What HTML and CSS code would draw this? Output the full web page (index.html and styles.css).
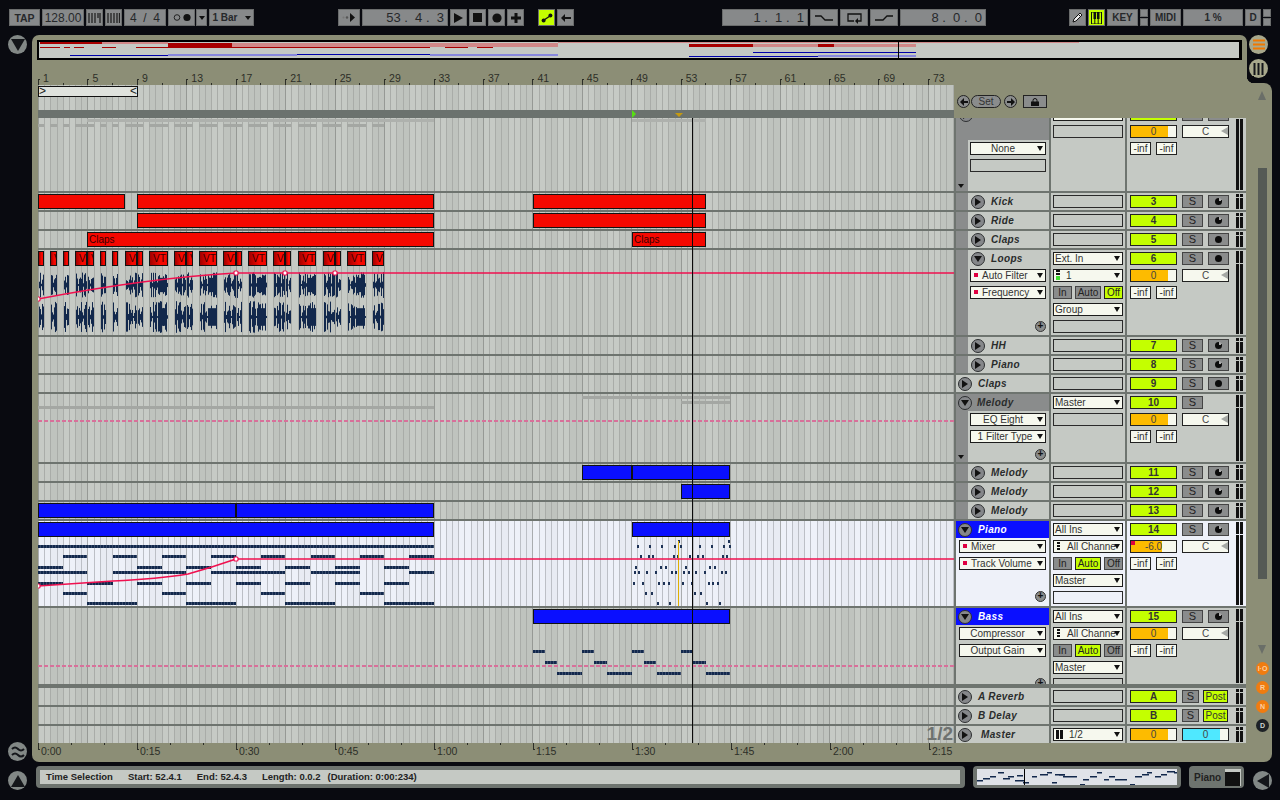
FILE: index.html
```html
<!DOCTYPE html>
<html lang="en">
<head>
  <meta charset="UTF-8">
  <title>Live</title>
  <link rel="stylesheet" href="styles.css">
</head>
<body>

  <div class="topbar">
    <div class="tgroup">
      <div class="btn b-tap"><b>TAP</b></div>
      <div class="btn b-num">128.00</div>
      <div class="btn b-sq"><svg width="13" height="10"><path d="M1 0v10M4 0v10M7 0v10M10 0v5M12 0v10" stroke="#222" stroke-width="1.3"/></svg></div>
      <div class="btn b-sq"><svg width="13" height="10"><path d="M1 0v10M4 0v10M7 0v10M10 0v10M12.5 0v10" stroke="#222" stroke-width="1.3"/></svg></div>
      <div class="btn b-num">4 &nbsp;/ &nbsp;4</div>
      <div class="btn b-mode"><svg width="20" height="9"><circle cx="5" cy="4.5" r="2.8" fill="none" stroke="#222"/><circle cx="15" cy="4.5" r="3.6" fill="#111"/></svg></div>
      <div class="btn b-drop"><span class="tri"></span></div>
      <div class="btn b-bar"><b class="semi">1 Bar</b><span class="tri"></span></div>
    </div>
    <div class="tgroup g-follow">
      <div class="btn b-follow"><svg width="14" height="9"><circle cx="1.5" cy="4.5" r="1" fill="#777"/><circle cx="5" cy="4.5" r="1.2" fill="#555"/><path d="M8 0l5 4.5-5 4.5z" fill="#111"/></svg></div>
      <div class="btn b-pos">53 .&nbsp; 4 .&nbsp; 3</div>
      <div class="btn b-sq"><svg width="11" height="12"><path d="M1 1l9 5-9 5z" fill="#111"/></svg></div>
      <div class="btn b-sq"><svg width="9" height="9"><rect width="9" height="9" fill="#111"/></svg></div>
      <div class="btn b-sq"><svg width="10" height="10"><circle cx="5" cy="5" r="4.6" fill="#111"/></svg></div>
      <div class="btn b-sq"><svg width="10" height="10"><path d="M5 0v10M0 5h10" stroke="#111" stroke-width="3"/></svg></div>
    </div>
    <div class="tgroup g-link">
      <div class="btn b-sq on"><svg width="12" height="10"><path d="M3 7l6-4" stroke="#111" stroke-width="1.4"/><circle cx="2.6" cy="7.4" r="2" fill="#111"/><circle cx="9.4" cy="2.6" r="2" fill="#111"/></svg></div>
      <div class="btn b-sq"><svg width="10" height="8"><path d="M4 0v8L0 4zM4 3h6v2H4z" fill="#111"/></svg></div>
    </div>
    <div class="tgroup g-loop">
      <div class="btn b-pos">1 .&nbsp; 1 .&nbsp; 1</div>
      <div class="btn b-wide"><svg width="18" height="8"><path d="M0 2h6l4 4h8" fill="none" stroke="#111" stroke-width="1.3"/></svg></div>
      <div class="btn b-wide"><svg width="17" height="12"><path d="M8 9H2V2h13v7h-3" fill="none" stroke="#111" stroke-width="1.3"/><path d="M12 6v6l-3-3z" fill="#111"/></svg></div>
      <div class="btn b-wide"><svg width="18" height="8"><path d="M0 6h8l4-4h6" fill="none" stroke="#111" stroke-width="1.3"/></svg></div>
      <div class="btn b-pos">8 .&nbsp; 0 .&nbsp; 0</div>
    </div>
    <div class="tgroup g-right">
      <div class="btn b-sq"><svg width="11" height="11"><path d="M1 10l1-3 6-6 2 2-6 6z" fill="#eee" stroke="#111"/><path d="M6.5 2.500l2 2" stroke="#111"/></svg></div>
      <div class="btn b-sq on"><svg width="11" height="12"><path d="M.5 0h10v12H.5zM3.800 0v12M7.200 0v12" fill="none" stroke="#111"/><path d="M2.500 0h2.600v7H2.500zM6 0h2.500v7H6z" fill="#111"/></svg></div>
      <div class="btn b-key"><b class="semi">KEY</b></div>
      <div class="pair"><span class="btn"></span><span class="btn"></span></div>
      <div class="btn b-key"><b class="semi">MIDI</b></div>
      <div class="btn b-cpu"><b class="semi">1 %</b></div>
      <div class="btn b-d"><b class="semi">D</b></div>
      <div class="pair"><span class="btn"></span><span class="btn"></span></div>
    </div>
  </div>

  <div class="middle">
    <div class="side-left">
      <div class="round"><svg width="14" height="12"><path d="M0 0h14L7 12z" fill="#14161a"/></svg></div>
      <div class="round"><svg width="14" height="12"><path d="M1 3q3-3 6 0t6 0M1 9q3-3 6 0t6 0" fill="none" stroke="#14161a" stroke-width="2"/></svg></div>
    </div>

    <div class="panel">
      <div class="overview">
        <svg id="overview" width="1205" height="20"></svg>
      </div>
      <div class="ruler" id="beat-ruler"></div>

      <div class="head-strip">
        <div class="locators grid-bg">
          <div class="loop-brace"><span>&gt;</span><span>&lt;</span></div>
          <div class="scrub">
            <span class="m-green"></span>
            <span class="m-yellow"></span>
          </div>
        </div>
        <div class="set-ctl">
          <span class="nav"><svg width="8" height="8"><path d="M0 4l4-4v3h4v2H4v3z" fill="#111"/></svg></span>
          <span class="set-btn">Set</span>
          <span class="nav"><svg width="8" height="8"><path d="M8 4L4 0v3H0v2h4v3z" fill="#111"/></svg></span>
          <span class="lock"><svg width="8" height="8"><path d="M2 4V2.500a2 2 0 0 1 4 0V4" fill="none" stroke="#111"/><rect y="3.500" width="8" height="4.500" fill="#111"/></svg></span>
        </div>
      </div>

      <div class="tracks">
        <div class="track t-first">
          <div class="lane grid-bg" id="drums"></div>
          <div class="name name-group">
            <div class="group-top"><span class="fold cut"></span></div>
            <div class="group-body">
              <span class="strip"><i class="down"></i></span>
              <div class="dev-list">
                <div class="dd center">None</div>
                <div class="box"></div>
              </div>
            </div>
          </div>
          <div class="col">
            <div class="dd"></div>
            <div class="box"></div>
          </div>
          <div class="mix">
            <div class="mix-main">
              <div class="row-w"><span class="act"></span><span class="sbtn"></span><span class="sbtn"></span></div>
              <div class="row-w"><span class="slider"><i></i><em>0</em></span><span class="pan">C</span></div>
              <div class="row-w"><span class="inf">-inf</span><span class="inf">-inf</span></div>
            </div>
            <div class="meter tall"><i></i><i></i></div>
          </div>
        </div>

        <div class="track">
          <div class="lane grid-bg" id="kick"></div>
          <div class="name child"><span class="fold"></span><span class="tname">Kick</span></div>
          <div class="col"><div class="box"></div></div>
          <div class="mix"><div class="mix-main"><div class="row-w"><span class="act">3</span><span class="sbtn">S</span><span class="sbtn arm midi"></span></div></div><div class="meter"><i></i><i></i></div></div>
        </div>
        <div class="track">
          <div class="lane grid-bg" id="ride"></div>
          <div class="name child"><span class="fold"></span><span class="tname">Ride</span></div>
          <div class="col"><div class="box"></div></div>
          <div class="mix"><div class="mix-main"><div class="row-w"><span class="act">4</span><span class="sbtn">S</span><span class="sbtn arm midi"></span></div></div><div class="meter"><i></i><i></i></div></div>
        </div>
        <div class="track">
          <div class="lane grid-bg" id="claps"></div>
          <div class="name child"><span class="fold"></span><span class="tname">Claps</span></div>
          <div class="col"><div class="box"></div></div>
          <div class="mix"><div class="mix-main"><div class="row-w"><span class="act">5</span><span class="sbtn">S</span><span class="sbtn arm"></span></div></div><div class="meter"><i></i><i></i></div></div>
        </div>

        <div class="track t-open">
          <div class="lane grid-bg" id="loops"></div>
          <div class="name child">
            <div class="opened">
              <div class="title"><span class="fold open"></span><span class="tname">Loops</span></div>
              <div class="dd"><i class="red"></i>Auto Filter</div>
              <div class="dd"><i class="red"></i>Frequency</div>
              <span class="plus">+</span>
            </div>
          </div>
          <div class="col">
            <div class="dd">Ext. In</div>
            <div class="dd"><i class="chan"></i>1</div>
            <div class="io"><span class="sbtn i">In</span><span class="sbtn a">Auto</span><span class="sbtn o yel">Off</span></div>
            <div class="dd">Group</div>
            <div class="box"></div>
          </div>
          <div class="mix">
            <div class="mix-main">
              <div class="row-w"><span class="act">6</span><span class="sbtn">S</span><span class="sbtn arm"></span></div>
              <div class="row-w"><span class="slider"><i></i><em>0</em></span><span class="pan">C</span></div>
              <div class="row-w"><span class="inf">-inf</span><span class="inf">-inf</span></div>
            </div>
            <div class="meter tall"><i></i><i></i></div>
          </div>
        </div>

        <div class="track">
          <div class="lane grid-bg" id="hh"></div>
          <div class="name child"><span class="fold"></span><span class="tname">HH</span></div>
          <div class="col"><div class="box"></div></div>
          <div class="mix"><div class="mix-main"><div class="row-w"><span class="act">7</span><span class="sbtn">S</span><span class="sbtn arm midi"></span></div></div><div class="meter"><i></i><i></i></div></div>
        </div>
        <div class="track">
          <div class="lane grid-bg" id="piano1"></div>
          <div class="name child"><span class="fold"></span><span class="tname">Piano</span></div>
          <div class="col"><div class="box"></div></div>
          <div class="mix"><div class="mix-main"><div class="row-w"><span class="act">8</span><span class="sbtn">S</span><span class="sbtn arm midi"></span></div></div><div class="meter"><i></i><i></i></div></div>
        </div>
        <div class="track">
          <div class="lane grid-bg" id="claps2"></div>
          <div class="name"><span class="fold top"></span><span class="tname">Claps</span></div>
          <div class="col"><div class="box"></div></div>
          <div class="mix"><div class="mix-main"><div class="row-w"><span class="act">9</span><span class="sbtn">S</span><span class="sbtn arm"></span></div></div><div class="meter"><i></i><i></i></div></div>
        </div>

        <div class="track t-melody">
          <div class="lane grid-bg" id="melody"></div>
          <div class="name name-group">
            <div class="group-top small"><span class="fold open top"></span><span class="tname t-top">Melody</span></div>
            <div class="group-body">
              <span class="strip"><i class="down"></i></span>
              <div class="dev-list">
                <div class="dd center">EQ Eight</div>
                <div class="dd center tight">1 Filter Type</div>
                <span class="plus">+</span>
              </div>
            </div>
          </div>
          <div class="col">
            <div class="dd">Master</div>
            <div class="box"></div>
          </div>
          <div class="mix">
            <div class="mix-main">
              <div class="row-w"><span class="act">10</span><span class="sbtn">S</span></div>
              <div class="row-w"><span class="slider"><i></i><em>0</em></span><span class="pan">C</span></div>
              <div class="row-w"><span class="inf">-inf</span><span class="inf">-inf</span></div>
            </div>
            <div class="meter tall"><i></i><i></i></div>
          </div>
        </div>

        <div class="track">
          <div class="lane grid-bg" id="mel1"></div>
          <div class="name child"><span class="fold"></span><span class="tname">Melody</span></div>
          <div class="col"><div class="box"></div></div>
          <div class="mix"><div class="mix-main"><div class="row-w"><span class="act">11</span><span class="sbtn">S</span><span class="sbtn arm midi"></span></div></div><div class="meter"><i></i><i></i></div></div>
        </div>
        <div class="track">
          <div class="lane grid-bg" id="mel2"></div>
          <div class="name child"><span class="fold"></span><span class="tname">Melody</span></div>
          <div class="col"><div class="box"></div></div>
          <div class="mix"><div class="mix-main"><div class="row-w"><span class="act">12</span><span class="sbtn">S</span><span class="sbtn arm midi"></span></div></div><div class="meter"><i></i><i></i></div></div>
        </div>
        <div class="track">
          <div class="lane grid-bg" id="mel3"></div>
          <div class="name child"><span class="fold"></span><span class="tname">Melody</span></div>
          <div class="col"><div class="box"></div></div>
          <div class="mix"><div class="mix-main"><div class="row-w"><span class="act">13</span><span class="sbtn">S</span><span class="sbtn arm midi"></span></div></div><div class="meter"><i></i><i></i></div></div>
        </div>

        <div class="track t-open selected">
          <div class="lane grid-bg" id="piano"></div>
          <div class="name">
            <div class="blue-title"><span class="fold open top"></span><span class="tname">Piano</span></div>
            <div class="dev-wide">
              <div class="dd"><i class="red"></i>Mixer</div>
              <div class="dd"><i class="red"></i>Track Volume</div>
              <span class="plus">+</span>
            </div>
          </div>
          <div class="col">
            <div class="dd">All Ins</div>
            <div class="dd tight"><i class="dots"></i>All Channe</div>
            <div class="io"><span class="sbtn i">In</span><span class="sbtn a yel">Auto</span><span class="sbtn o">Off</span></div>
            <div class="dd">Master</div>
            <div class="box"></div>
          </div>
          <div class="mix">
            <div class="mix-main">
              <div class="row-w"><span class="act">14</span><span class="sbtn">S</span><span class="sbtn arm midi"></span></div>
              <div class="row-w"><span class="slider low"><i></i><em>-6.0</em><u></u></span><span class="pan">C</span></div>
              <div class="row-w"><span class="inf">-inf</span><span class="inf">-inf</span></div>
            </div>
            <div class="meter tall"><i></i><i></i></div>
          </div>
        </div>

        <div class="track t-bass">
          <div class="lane grid-bg" id="bass"></div>
          <div class="name">
            <div class="blue-title"><span class="fold open top"></span><span class="tname">Bass</span></div>
            <div class="dev-wide">
              <div class="dd center">Compressor</div>
              <div class="dd center">Output Gain</div>
              <span class="plus">+</span>
            </div>
          </div>
          <div class="col">
            <div class="dd">All Ins</div>
            <div class="dd tight"><i class="dots"></i>All Channe</div>
            <div class="io"><span class="sbtn i">In</span><span class="sbtn a yel">Auto</span><span class="sbtn o">Off</span></div>
            <div class="dd">Master</div>
            <div class="box"></div>
          </div>
          <div class="mix">
            <div class="mix-main">
              <div class="row-w"><span class="act">15</span><span class="sbtn">S</span><span class="sbtn arm midi"></span></div>
              <div class="row-w"><span class="slider"><i></i><em>0</em></span><span class="pan">C</span></div>
              <div class="row-w"><span class="inf">-inf</span><span class="inf">-inf</span></div>
            </div>
            <div class="meter tall"><i></i><i></i></div>
          </div>
        </div>

        <div class="track">
          <div class="lane grid-bg"></div>
          <div class="name"><span class="fold top"></span><span class="tname">A Reverb</span></div>
          <div class="col"><div class="box"></div></div>
          <div class="mix"><div class="mix-main"><div class="row-w"><span class="act">A</span><span class="sbtn ret">S</span><span class="post">Post</span></div></div><div class="meter"><i></i><i></i></div></div>
        </div>
        <div class="track">
          <div class="lane grid-bg"></div>
          <div class="name"><span class="fold top"></span><span class="tname">B Delay</span></div>
          <div class="col"><div class="box"></div></div>
          <div class="mix"><div class="mix-main"><div class="row-w"><span class="act">B</span><span class="sbtn ret">S</span><span class="post">Post</span></div></div><div class="meter"><i></i><i></i></div></div>
        </div>
        <div class="track">
          <div class="lane grid-bg"><span class="zoom-tag">1/2</span></div>
          <div class="name"><span class="fold top"></span><span class="tname t-master">Master</span></div>
          <div class="col"><div class="dd"><i class="ii"></i>1/2</div></div>
          <div class="mix"><div class="mix-main"><div class="row-w"><span class="slider"><i></i><em>0</em></span><span class="slider cyan"><i></i><em>0</em></span></div></div><div class="meter"><i></i><i></i></div></div>
        </div>

        <div class="playhead"></div>
      </div>

      <div class="ruler time" id="time-ruler"></div>
    </div>

    <div class="rail">
      <div class="tabs">
        <div class="round"><svg width="12" height="11"><path d="M0 1.500h12M0 5.500h12M0 9.500h12" stroke="#f07800" stroke-width="2"/></svg></div>
        <div class="round"><svg width="11" height="12"><path d="M1.500 0v12M5.500 0v12M9.500 0v12" stroke="#14161a" stroke-width="2"/></svg></div>
      </div>
      <div class="rail-body">
        <span class="arrow up"></span>
        <div class="scroll"></div>
        <span class="arrow dn"></span>
        <span class="mini m1">I·O</span>
        <span class="mini m2">R</span>
        <span class="mini m3">N</span>
        <span class="mini m4">D</span>
      </div>
    </div>
  </div>

  <div class="statusbar">
    <div class="round"><svg width="14" height="12"><path d="M7 0l7 12H0z" fill="#14161a"/></svg></div>
    <div class="status">
      <span>Time Selection</span><span>Start: 52.4.1</span><span>End: 52.4.3</span><span>Length: 0.0.2</span><span class="dur">(Duration: 0:00:234)</span>
    </div>
    <div class="thumb"><svg id="thumb" width="200" height="16"></svg></div>
    <div class="instr"><b>Piano</b><span class="amp"></span></div>
    <div class="round last"><svg width="12" height="14"><path d="M0 7l12-7v14z" fill="#14161a"/></svg></div>
  </div>

  <script src="script.js"></script>
</body>
</html>
```

FILE: styles.css
```css
* {
  box-sizing: border-box;
}

body {
  margin: 0;
  width: 1280px;
  height: 800px;
  overflow: hidden;
  background-color: #090a10;
  font-family: "Liberation Sans", Arial, sans-serif;
  font-size: 10px;
  color: #222;
  display: flex;
  flex-direction: column;
}

/* top transport bar */
.topbar {
  height: 35px;
  padding: 9px 0 0 9px;
  display: flex;
  align-items: flex-start;
}

.tgroup {
  display: flex;
  gap: 2px;
}

.g-follow { margin-left: 84px; }
.g-link { margin-left: 14px; }
.g-loop { margin-left: 148px; }
.g-right { margin-left: 83px; }

.btn {
  height: 17px;
  background-color: #87898a;
  border: 1px solid #6a6c6c;
  display: flex;
  align-items: center;
  justify-content: center;
  color: #26282a;
  font-size: 12px;
  white-space: pre;
}

.btn b {
  font-size: 10.5px;
}

.btn .semi {
  font-size: 10px;
}

.btn.on {
  background-color: #c4ff00;
}

.b-tap { width: 31px; }
.b-num { width: 42px; }
.b-sq { width: 17px; }
.b-mode { width: 27px; margin-right: -1px; }
.b-drop { width: 11px; }
.b-bar { width: 45px; gap: 7px; }
.b-follow { width: 22px; }
.b-pos { width: 86px; justify-content: flex-end; padding-right: 3px; font-size: 13px; }
.b-wide { width: 28px; }
.b-key { width: 31px; }
.b-cpu { width: 60px; }
.b-d { width: 16px; }

.pair {
  display: flex;
  flex-direction: column;
  gap: 1px;
  width: 8px;
}

.pair .btn {
  height: 8px;
}

.tri {
  width: 0;
  height: 0;
  border: 3px solid transparent;
  border-top: 4px solid #111;
  border-bottom: 0;
}

/* middle section */
.middle {
  height: 727px;
  display: flex;
}

.side-left {
  width: 32px;
  padding: 0 0 0 8px;
  display: flex;
  flex-direction: column;
  justify-content: space-between;
}

.round {
  width: 19px;
  height: 19px;
  border-radius: 50%;
  background-color: #828886;
  display: flex;
  align-items: center;
  justify-content: center;
}

.side-left .round:last-child {
  margin-bottom: 1px;
}

.panel {
  width: 1215px;
  padding: 5px 0 0 5px;
  background-color: #8c8e76;
  border-radius: 7px 7px 0 7px;
}

.overview {
  width: 1205px;
  height: 20px;
  background-color: #c5c9c4;
  border: solid #000;
  border-width: 2px 3px 2px 2px;
  overflow: hidden;
}

.overview svg {
  display: block;
  margin: -2px 0 0 -2px;
}

.ruler {
  position: relative;
  width: 916px;
  height: 25px;
  margin-left: 1px;
}

.ruler span {
  position: absolute;
  bottom: 1px;
  color: #2c2e28;
  font-size: 10.5px;
  line-height: 11px;
}

.ruler i {
  position: absolute;
  bottom: 0;
  width: 1px;
  height: 2px;
  background-color: #2c2e28;
}

.ruler i.big {
  height: 6px;
}

.ruler i.big::after {
  content: "";
  position: absolute;
  left: 0;
  top: 0;
  width: 2px;
  height: 1px;
  background-color: #2c2e28;
}

.ruler.time {
  height: 19px;
}

.ruler.time span {
  top: 3px;
  bottom: auto;
}

.ruler.time i {
  top: 0;
  bottom: auto;
}

.ruler.time i.big {
  height: 7px;
}

.ruler.time i.big::after {
  top: 6px;
}

.grid-bg {
  background-image:
    repeating-linear-gradient(90deg, #969995 0 1px, transparent 1px 49.44px),
    repeating-linear-gradient(90deg, #a9aca8 0 1px, transparent 1px 6.18px),
    repeating-linear-gradient(90deg, #c6cac5 0 12.36px, #bfc3be 12.36px 24.72px);
}

.head-strip {
  height: 33px;
  margin-left: 1px;
  display: flex;
}

.locators {
  position: relative;
  width: 916px;
}

.loop-brace {
  position: absolute;
  left: 0;
  top: 1px;
  width: 100px;
  height: 11px;
  background-color: #dfe2dd;
  border: 1px solid #111;
  display: flex;
  justify-content: space-between;
  font-size: 12px;
  line-height: 9px;
}

.scrub {
  position: absolute;
  left: 0;
  bottom: 0;
  width: 100%;
  height: 8px;
  background-color: #6b726e;
}

.m-green {
  position: absolute;
  left: 594px;
  top: 0;
  width: 0;
  height: 0;
  border: 4px solid transparent;
  border-left: 4px solid #55e010;
  border-right: 0;
}

.m-yellow {
  position: absolute;
  left: 637px;
  top: 3px;
  width: 0;
  height: 0;
  border: 4px solid transparent;
  border-top: 4px solid #c59a10;
  border-bottom: 0;
}

.set-ctl {
  margin-left: 3px;
  padding-top: 10px;
  display: flex;
  gap: 1px;
  align-items: flex-start;
}

.nav {
  width: 13px;
  height: 13px;
  border-radius: 50%;
  border: 1px solid #222;
  background-color: #8a8c8c;
  display: flex;
  align-items: center;
  justify-content: center;
}

.set-btn {
  width: 30px;
  height: 13px;
  border: 1px solid #222;
  border-radius: 7px;
  background-color: #8a8c8c;
  text-align: center;
  line-height: 11px;
  margin-right: 2px;
  color: #333;
}

.lock {
  width: 24px;
  height: 13px;
  margin-left: 5px;
  border: 1px solid #222;
  background-color: #8a8c8c;
  display: flex;
  align-items: center;
  justify-content: center;
}

/* tracks */
.tracks {
  position: relative;
  margin-left: 1px;
  width: 1208px;
  background-color: #6e746f;
  display: flex;
  flex-direction: column;
  gap: 2px;
}

.track {
  height: 17px;
  display: flex;
  gap: 2px;
  overflow: hidden;
}

.t-first { height: 73px; }
.t-open { height: 85px; }
.t-melody { height: 68px; }
.t-bass { height: 76px; margin-bottom: 2px; }

.lane {
  position: relative;
  width: 916px;
  overflow: hidden;
}

.selected .lane {
  background-image:
    repeating-linear-gradient(90deg, #a9acaf 0 1px, transparent 1px 49.44px),
    repeating-linear-gradient(90deg, #bcbfc6 0 1px, transparent 1px 6.18px),
    repeating-linear-gradient(90deg, #eef1f9 0 12.36px, #e8ebf3 12.36px 24.72px);
}

.name {
  width: 93px;
  background-color: #c5c9c4;
  display: flex;
  align-items: flex-start;
  align-content: flex-start;
  flex-wrap: wrap;
  position: relative;
}

.name.child {
  border-left: 12px solid #8a8c8c;
}

.selected .name,
.selected .col,
.selected .mix {
  background-color: #eef1f9;
}

.fold {
  width: 14px;
  height: 14px;
  margin: 2px 0 0 3px;
  border-radius: 50%;
  background-color: #85878a;
  border: 1.5px solid #2c2e30;
  position: relative;
  flex: none;
}

.fold::after {
  content: "";
  position: absolute;
  left: 3px;
  top: 1.5px;
  border: 4px solid transparent;
  border-left: 6px solid #111;
  border-right: 0;
}

.fold.open::after {
  left: 1.5px;
  top: 3px;
  border: 4px solid transparent;
  border-top: 6px solid #111;
  border-bottom: 0;
}

.fold.top {
  margin-left: 2px;
}

.fold.cut {
  margin: -10px 0 0 3px;
}

.tname {
  margin: 2px 0 0 6px;
  font-weight: bold;
  font-style: italic;
  letter-spacing: .35px;
  line-height: 13px;
  color: #2a2c2c;
}

.t-master {
  margin-left: 9px;
}

.t-top {
  margin-left: 5px;
}

.name-group {
  background-color: transparent;
  flex-direction: column;
  flex-wrap: nowrap;
}

.group-top {
  width: 93px;
  height: 22px;
  background-color: #8a8c8c;
  display: flex;
  overflow: hidden;
}

.group-top.small {
  height: 17px;
}

.group-body {
  flex: 1;
  width: 93px;
  display: flex;
}

.strip {
  width: 12px;
  background-color: #8a8c8c;
  position: relative;
}

.down {
  position: absolute;
  left: 2px;
  bottom: 3px;
  border: 3.5px solid transparent;
  border-top: 4px solid #111;
  border-bottom: 0;
}

.dev-list {
  flex: 1;
  background-color: #c5c9c4;
  padding: 2px 3px 0 2px;
  display: flex;
  flex-direction: column;
  gap: 4px;
  position: relative;
}

.opened {
  width: 81px;
  height: 85px;
  padding: 0 3px 0 2px;
  display: flex;
  flex-direction: column;
  gap: 4px;
  position: relative;
}

.title {
  display: flex;
  height: 15px;
}

.opened .fold {
  margin-left: 1px;
}

.blue-title {
  width: 93px;
  height: 17px;
  background-color: #0a0fff;
  display: flex;
  margin-bottom: 2px;
}

.blue-title .tname {
  color: #fff;
}

.dev-wide {
  width: 93px;
  padding: 0 3px;
  display: flex;
  flex-direction: column;
  gap: 4px;
}

.plus {
  position: absolute;
  right: 3px;
  bottom: 3px;
  width: 11px;
  height: 11px;
  border-radius: 50%;
  background-color: #8a8c8c;
  border: 1px solid #333;
  line-height: 8px;
  text-align: center;
  color: #111;
  font-weight: bold;
}

.dev-list .plus {
  bottom: 2px;
}

.selected .plus,
.t-bass .plus {
  top: 70px;
  bottom: auto;
}

.col {
  width: 74px;
  padding: 2px 0 0 2px;
  background-color: #c5c9c4;
  display: flex;
  flex-direction: column;
  gap: 4px;
}

.box {
  height: 13px;
  border: 1px solid #2a2a2a;
  flex: none;
  width: 100%;
}

.col .box,
.col .dd,
.col .io {
  width: 70px;
}

.dd {
  height: 13px;
  flex: none;
  background-color: #f6f8ee;
  border: 1px solid #1c1c1c;
  line-height: 11px;
  padding: 0 10px 0 1px;
  position: relative;
  white-space: nowrap;
  overflow: hidden;
  color: #333;
}

.dd::after {
  content: "";
  position: absolute;
  right: 2px;
  top: 3px;
  border: 3px solid transparent;
  border-top: 5px solid #111;
  border-bottom: 0;
}

.dd.center {
  text-align: center;
  padding: 0 10px 0 0;
}

.dd.tight {
  padding-right: 6px;
}

.dd i {
  display: inline-block;
  vertical-align: top;
}

.red {
  width: 4px;
  height: 4px;
  background-color: #e00040;
  margin: 3px 4px 0 2px;
}

.chan {
  width: 4px;
  height: 10px;
  margin: 0 6px 0 1px;
  background: linear-gradient(#111 0 2px, #f6f8ee 2px 3px, #111 3px 5px, #f6f8ee 5px 6px, #44dd33 6px);
}

.dots {
  width: 3px;
  height: 9px;
  margin: 1px 7px 0 2px;
  background: repeating-linear-gradient(#111 0 2px, #f6f8ee 2px 3px);
}

.ii {
  width: 7px;
  height: 9px;
  margin: 1px 6px 0 1px;
  background: linear-gradient(90deg, #111 0 3px, transparent 3px 4px, #111 4px);
}

.io {
  display: flex;
  gap: 3px;
  flex: none;
}

.sbtn {
  display: block;
  width: 21px;
  height: 13px;
  background-color: #8a8c8c;
  border: 1px solid #444;
  text-align: center;
  line-height: 11px;
  color: #222;
  flex: none;
  position: relative;
}

.row-w .sbtn {
  font-size: 11px;
}

.sbtn.i { width: 19px; }
.sbtn.a { width: 26px; }
.sbtn.o { width: 19px; }

.sbtn.yel {
  background-color: #c4ff00;
  border-color: #222;
}

.row-w .sbtn.ret {
  width: 17px;
  margin-right: -1px;
}

.arm::after {
  content: "";
  position: absolute;
  left: 6px;
  top: 2px;
  width: 7px;
  height: 7px;
  border-radius: 50%;
  background-color: #0c0c0c;
}

.midi::after {
  background: conic-gradient(#0c0c0c 0 4%, #aaa 4% 18%, #0c0c0c 18%);
}

.mix {
  width: 119px;
  padding: 2px 0 0 3px;
  background-color: #c5c9c4;
  display: flex;
  gap: 7px;
}

.mix-main {
  width: 99px;
  display: flex;
  flex-direction: column;
  gap: 4px;
}

.row-w {
  display: flex;
  gap: 5px;
  height: 13px;
}

.act {
  width: 47px;
  height: 13px;
  background-color: #c4ff00;
  border: 1px solid #222;
  text-align: center;
  font-weight: bold;
  line-height: 11px;
  color: #333;
}

.post {
  width: 25px;
  height: 13px;
  background-color: #c4ff00;
  border: 1px solid #222;
  text-align: center;
  line-height: 11px;
  color: #333;
}

.slider {
  position: relative;
  width: 47px;
  height: 13px;
  background-color: #f6f8ee;
  border: 1px solid #222;
  text-align: center;
  line-height: 11px;
  color: #444;
}

.slider i {
  position: absolute;
  left: 0;
  top: 0;
  bottom: 0;
  width: 83%;
  background-color: #fdbb00;
}

.slider em {
  position: relative;
  font-style: normal;
}

.slider.low i {
  width: 68%;
}

.slider u {
  position: absolute;
  left: 0;
  top: 0;
  width: 4px;
  height: 4px;
  background-color: #e00040;
}

.slider.cyan i {
  background-color: #4fe8ff;
}

.pan {
  position: relative;
  width: 47px;
  height: 13px;
  background-color: #f6f8ee;
  border: 1px solid #222;
  text-align: center;
  line-height: 11px;
  color: #444;
}

.pan::after {
  content: "";
  position: absolute;
  right: 0;
  top: 1px;
  border: 4.5px solid transparent;
  border-right: 7px solid #a5a8a4;
  border-left: 0;
}

.inf {
  width: 21px;
  height: 13px;
  background-color: #f6f8ee;
  border: 1px solid #222;
  text-align: center;
  line-height: 11px;
  color: #333;
}

.meter {
  width: 7px;
  height: 15px;
  margin-top: -1px;
  display: flex;
  gap: 1px;
}

.meter.tall {
  height: 100%;
}

.meter i {
  width: 3px;
  background: linear-gradient(#111 0 3px, transparent 3px 4px, #111 4px);
}

.meter.tall i {
  background: linear-gradient(#111 0 12px, transparent 12px 13px, #111 13px);
}

.t-first .mix-main,
.t-first .col {
  margin-top: -12px;
}

.t-first .col {
  padding-top: 0;
}

.t-first .col .dd {
  margin-top: 2px;
}

.t-first .meter.tall i {
  background: #111;
}

.playhead {
  position: absolute;
  left: 654px;
  top: 0;
  bottom: 0;
  width: 1px;
  background-color: #0a0a0a;
}

.zoom-tag {
  position: absolute;
  right: 1px;
  top: -2px;
  font-size: 19px;
  line-height: 20px;
  font-weight: bold;
  color: #6e7270;
}

/* arrangement items placed by script.js */
.clip {
  position: absolute;
  top: 1px;
  height: 15px;
  border: 1px solid #111;
  overflow: hidden;
  white-space: nowrap;
  line-height: 13px;
  padding-left: 1px;
  color: #3a0000;
}

.c-red {
  background-color: #f50800;
}

.c-blue {
  background-color: #0a0fff;
}

.clip.small {
  background-image: linear-gradient(90deg, #a00000, #f50800 60%);
  padding-left: 3px;
}

.note {
  position: absolute;
  height: 3px;
  background: repeating-linear-gradient(90deg, #12284c 0 2px, #3a4c6c 2px 3px);
}

.note.tick {
  background: #1d3256;
}

.band {
  position: absolute;
  height: 3px;
  background-color: #a4a7a3;
}

.band.pale {
  background-color: #aeb1ad;
}

.dash-line {
  position: absolute;
  left: 0;
  right: 0;
  height: 2px;
  background: repeating-linear-gradient(90deg, #d8709a 0 4px, transparent 4px 6px);
}

.lane svg {
  position: absolute;
  left: 0;
  top: 0;
}

.cursor {
  position: absolute;
  left: 640px;
  top: 20px;
  bottom: 0;
  width: 1px;
  background-color: #e0b000;
}

/* right rail */
.rail {
  width: 25px;
  display: flex;
  flex-direction: column;
}

.tabs {
  height: 48px;
  position: relative;
}

.tabs .round {
  position: absolute;
  left: 2px;
  top: 0;
  background-color: #a8a88c;
}

.tabs .round:last-child {
  top: 24px;
}

.rail-body {
  position: relative;
  flex: 1;
  background-color: #8c8e76;
  border-radius: 0 8px 8px 0;
}

.rail-body::before {
  content: "";
  position: absolute;
  left: 0;
  top: -7px;
  width: 7px;
  height: 7px;
  background: radial-gradient(circle at 100% 0, #090a10 7px, #8c8e76 7.5px);
}

.arrow {
  position: absolute;
  left: 11px;
  border: 4.5px solid transparent;
}

.arrow.up {
  top: 8px;
  border-bottom: 9px solid #6a6e68;
  border-top: 0;
}

.arrow.dn {
  top: 562px;
  border-top: 9px solid #6a6e68;
  border-bottom: 0;
}

.scroll {
  position: absolute;
  left: 11px;
  top: 85px;
  width: 9px;
  height: 411px;
  background-color: #555a55;
}

.mini {
  position: absolute;
  left: 9px;
  width: 13px;
  height: 13px;
  border-radius: 50%;
  background-color: #f07c10;
  color: #ffd0a0;
  font-size: 7px;
  font-weight: bold;
  line-height: 13px;
  text-align: center;
}

.m1 { top: 579px; }
.m2 { top: 598px; }
.m3 { top: 617px; }

.m4 {
  top: 636px;
  background-color: #1e2226;
  color: #cfd3d0;
}

/* bottom status bar */
.statusbar {
  height: 38px;
  padding: 4px 0 0 8px;
  display: flex;
  align-items: flex-start;
}

.statusbar .round {
  margin-top: 5px;
}

.status {
  width: 929px;
  height: 22px;
  margin-left: 9px;
  background-color: #c5c9c4;
  border: solid #6e746f;
  border-width: 4px 5px 4px 4px;
  border-radius: 4px;
  padding-left: 6px;
  display: flex;
  gap: 15px;
  font-weight: bold;
  font-size: 9.5px;
  line-height: 14px;
  color: #222;
  white-space: nowrap;
}

.status .dur {
  margin-left: -8px;
}

.thumb {
  width: 208px;
  height: 22px;
  margin-left: 8px;
  background-color: #dfe2e8;
  border: solid #6e746f;
  border-width: 3px 4px;
  border-radius: 4px;
}

.thumb svg {
  display: block;
}

.instr {
  width: 55px;
  height: 22px;
  margin-left: 8px;
  background-color: #6e746f;
  border-radius: 4px;
  padding-left: 5px;
  display: flex;
  align-items: center;
  gap: 4px;
}

.instr b {
  font-size: 10px;
  color: #222;
}

.amp {
  width: 15px;
  height: 17px;
  background-color: #111;
  border-top: 3px solid #c5c9c4;
  box-shadow: 1px 0 0 #c5c9c4;
}

.statusbar .round.last {
  margin-left: 9px;
}
```

FILE: script.js
```js
// x coordinates below are screen pixels, lanes start at 38
const laneLeft = 38;

const smallClips = [
  [38, 44, ''], [50, 57, 'V'], [63, 69, ''], [75, 87, 'VT'], [87, 94, 'V'],
  [100, 106, ''], [112, 118, ''], [125, 137, 'VT'], [137, 143, ''], [149, 168, 'VTD'],
  [174, 186, 'VT'], [186, 193, 'V'], [199, 217, 'VTD'], [223, 236, 'VT'], [236, 242, ''],
  [248, 267, 'VTD'], [273, 285, 'VT'], [285, 291, ''], [298, 316, 'VTD'], [323, 335, 'VT'],
  [335, 341, ''], [347, 366, 'VTD'], [372, 384, 'VT']
];

function add(laneId, className, x1, x2, top, text) {
  const el = document.createElement('div');
  el.className = className;
  el.style.left = (x1 - laneLeft) + 'px';
  el.style.width = (x2 - x1) + 'px';
  if (top !== null) el.style.top = top + 'px';
  if (text) el.textContent = text;
  document.getElementById(laneId).appendChild(el);
  return el;
}

function clips(laneId, color, list) {
  list.forEach(c => add(laneId, 'clip ' + color, c[0], c[1], null, c[2]));
}

clips('kick', 'c-red', [[38, 125], [137, 434], [533, 706]]);
clips('ride', 'c-red', [[137, 434], [533, 706]]);
clips('claps', 'c-red', [[87, 434, 'Claps'], [632, 706, 'Claps']]);
clips('mel1', 'c-blue', [[582, 632], [632, 730]]);
clips('mel2', 'c-blue', [[681, 730]]);
clips('mel3', 'c-blue', [[38, 236], [236, 434]]);
clips('piano', 'c-blue', [[38, 434], [632, 730]]);
clips('bass', 'c-blue', [[533, 730]]);

smallClips.forEach(c => {
  add('loops', 'clip c-red small', c[0], c[1], null, c[2]);
  add('drums', 'band', c[0], c[1], 6);
});
add('drums', 'band pale', 87, 434, 1);
add('drums', 'band pale', 632, 706, 1);

// group overview bands
add('melody', 'band', 38, 434, 12);
add('melody', 'band', 582, 730, 2);
add('melody', 'band', 681, 730, 7);
add('melody', 'dash-line', 38, 954, 26);
add('bass', 'dash-line', 38, 954, 57);

// piano notes, one array per key row (screen y, then x pairs)
const pianoRows = [
  [546, 38, 434],
  [556, 63, 87, 113, 137, 162, 186, 211, 236, 261, 285, 311, 335, 360, 384, 409, 434],
  [567, 38, 63, 137, 162, 186, 211, 236, 261, 285, 310, 335, 360, 384, 409],
  [572, 38, 87, 113, 186, 211, 285, 311, 360, 409, 434],
  [583, 38, 63, 87, 113, 137, 162, 186, 211, 236, 261, 285, 310, 335, 360, 384, 409],
  [593, 63, 87, 162, 186, 261, 285, 360, 384],
  [603, 87, 137, 186, 236, 285, 335, 384, 434]
];
pianoRows.forEach(r => {
  for (let i = 1; i < r.length; i += 2) add('piano', 'note', r[i], r[i + 1], r[0] - 521 - 1);
});

const pianoTicks = {
  541: [728, 678],
  546: [637, 649, 661, 674, 680, 699, 711, 723, 729],
  556: [640, 648, 652, 673, 677, 689, 697, 702, 722, 726],
  567: [635, 660, 665, 685, 709, 714],
  572: [634, 638, 646, 655, 671, 675, 683, 688, 695, 704, 721, 725],
  583: [633, 642, 658, 663, 668, 682, 691, 708, 712, 717],
  593: [645, 651, 694, 700],
  603: [657, 669, 706, 719]
};
Object.keys(pianoTicks).forEach(y => {
  pianoTicks[y].forEach(x => add('piano', 'note tick', x, x + 2, y - 521 - 1));
});

const cursor = document.createElement('div');
cursor.className = 'cursor';
document.getElementById('piano').appendChild(cursor);

const bassRows = [
  [651, 533, 545, 582, 594, 632, 644, 681, 692],
  [662, 545, 557, 594, 607, 644, 656, 693, 706],
  [673, 557, 582, 607, 632, 657, 681, 706, 730]
];
bassRows.forEach(r => {
  for (let i = 1; i < r.length; i += 2) add('bass', 'note', r[i], r[i + 1], r[0] - 608 - 1);
});

// small deterministic random, so the waveform is the same on every load
let seed = 7;
function rnd() {
  seed = (seed * 16807) % 2147483647;
  return seed / 2147483647;
}

function laneSvg(laneId, body) {
  const svg = document.createElementNS('http://www.w3.org/2000/svg', 'svg');
  svg.setAttribute('width', 916);
  svg.setAttribute('height', 90);
  svg.innerHTML = body;
  document.getElementById(laneId).appendChild(svg);
}

let wave = '';
smallClips.forEach(c => {
  [[35, 13], [67, 16]].forEach(ch => {
    for (let x = c[0] + 1; x < c[1]; x++) {
      const pos = (x - c[0]) / (c[1] - c[0]);
      let amp = ch[1] * (0.25 + rnd() * 0.75);
      if ((x - c[0]) % 5 === 3) amp *= 0.2;
      if (c[1] - c[0] > 15 && pos > 0.45 && pos < 0.9) amp = Math.max(amp, ch[1] * 0.55);
      wave += `M${x - laneLeft + 0.5} ${ch[0] - amp}V${ch[0] + amp}`;
    }
  });
});

function autoPoints(list) {
  return list.map(p => `<rect x="${p[0] - 2}" y="${p[1] - 2}" width="4" height="4" rx="1" fill="#fff" stroke="#f0104f" stroke-width="1.2"/>`).join('');
}

laneSvg('loops',
  `<path d="${wave}" stroke="#12284c" stroke-width="1" fill="none"/>` +
  '<path d="M0 49Q110 28 198 23H916" stroke="#f0104f" stroke-width="1.6" fill="none"/>' +
  autoPoints([[0, 49], [198, 23], [247, 23], [297, 23]]));

laneSvg('piano',
  '<path d="M0 65L75 60Q120 58 150 53Q175 46 198 38H916" stroke="#f0104f" stroke-width="1.6" fill="none"/>' +
  autoPoints([[0, 65], [198, 38]]));

// rulers
function rulerMark(ruler, x, big, text, offset) {
  const tick = document.createElement('i');
  if (big) tick.className = 'big';
  tick.style.left = x + 'px';
  ruler.appendChild(tick);
  if (text) {
    const label = document.createElement('span');
    label.style.left = (x + offset) + 'px';
    label.textContent = text;
    ruler.appendChild(label);
  }
}

const beatRuler = document.getElementById('beat-ruler');
for (let bar = 1; bar <= 73; bar += 2) {
  const x = (bar - 1) * 12.36;
  const labelled = (bar - 1) % 4 === 0;
  rulerMark(beatRuler, x, labelled, labelled ? String(bar) : '', 5);
}

const timeRuler = document.getElementById('time-ruler');
for (let sec = 0; sec <= 135; sec += 5) {
  const x = sec * 6.6;
  const labelled = sec % 15 === 0;
  const text = Math.floor(sec / 60) + ':' + String(sec % 60).padStart(2, '0');
  rulerMark(timeRuler, x, labelled, labelled ? text : '', 3);
}

// overview, x and y are screen pixels minus the box origin (37, 40)
const overviewRects = [
  [42, 2, 40, 102, '#a80000'], [42, 2, 102, 168, '#d08888'], [43, 4, 168, 232, '#a80000'],
  [43, 4, 232, 558, '#d08888'], [44, 3, 689, 753, '#a80000'], [44, 3, 753, 818, '#d08888'],
  [44, 3, 818, 834, '#a80000'], [44, 3, 834, 916, '#d08888'], [42, 1, 558, 689, '#d08888'],
  [42, 1, 689, 1079, '#d08888'], [47, 1, 40, 60, '#a80000'], [47, 1, 64, 70, '#a80000'],
  [47, 1, 74, 84, '#a80000'], [47, 1, 102, 116, '#a80000'], [47, 1, 136, 168, '#a80000'],
  [47, 1, 168, 430, '#a80000'], [47, 1, 445, 468, '#a80000'], [47, 1, 477, 493, '#a80000'],
  [55, 1, 70, 168, '#0000aa'], [54, 2, 168, 297, '#8888dd'], [54, 1, 297, 430, '#0000aa'],
  [54, 2, 430, 558, '#8888dd'], [56, 1, 689, 818, '#0000aa'], [52, 1, 753, 818, '#0000aa'],
  [52, 1, 818, 916, '#0000aa'], [55, 2, 818, 916, '#8888dd']
];
document.getElementById('overview').innerHTML = overviewRects.map(r =>
  `<rect x="${r[2] - 37}" y="${r[0] - 40}" width="${r[3] - r[2]}" height="${r[1]}" fill="${r[4]}"/>`
).join('') + '<rect x="861" y="0" width="1" height="20" fill="#000"/>';

// clip thumbnail in the status bar, y/x relative to the svg
const thumbNotes = [
  [11, 0, 6], [9, 6, 13], [7, 13, 19], [3, 21, 27], [9, 26, 33], [7, 31, 37], [11, 38, 47],
  [6, 40, 46], [13, 46, 52], [7, 55, 60], [5, 63, 71], [3, 70, 75], [5, 78, 88], [13, 75, 80],
  [5, 82, 88], [7, 86, 100], [10, 106, 112], [7, 113, 120], [3, 120, 125], [10, 127, 132],
  [7, 132, 138], [10, 138, 150], [15, 103, 108], [15, 153, 158], [7, 158, 165], [5, 165, 172],
  [3, 170, 175], [7, 178, 184], [5, 184, 190], [2, 190, 198], [3, 197, 200]
];
document.getElementById('thumb').innerHTML = thumbNotes.map(n =>
  `<rect x="${n[1]}" y="${n[0]}" width="${n[2] - n[1]}" height="1.5" fill="#12284c"/>`
).join('') + '<rect x="47" y="0" width="1" height="16" fill="#000"/>';
```
